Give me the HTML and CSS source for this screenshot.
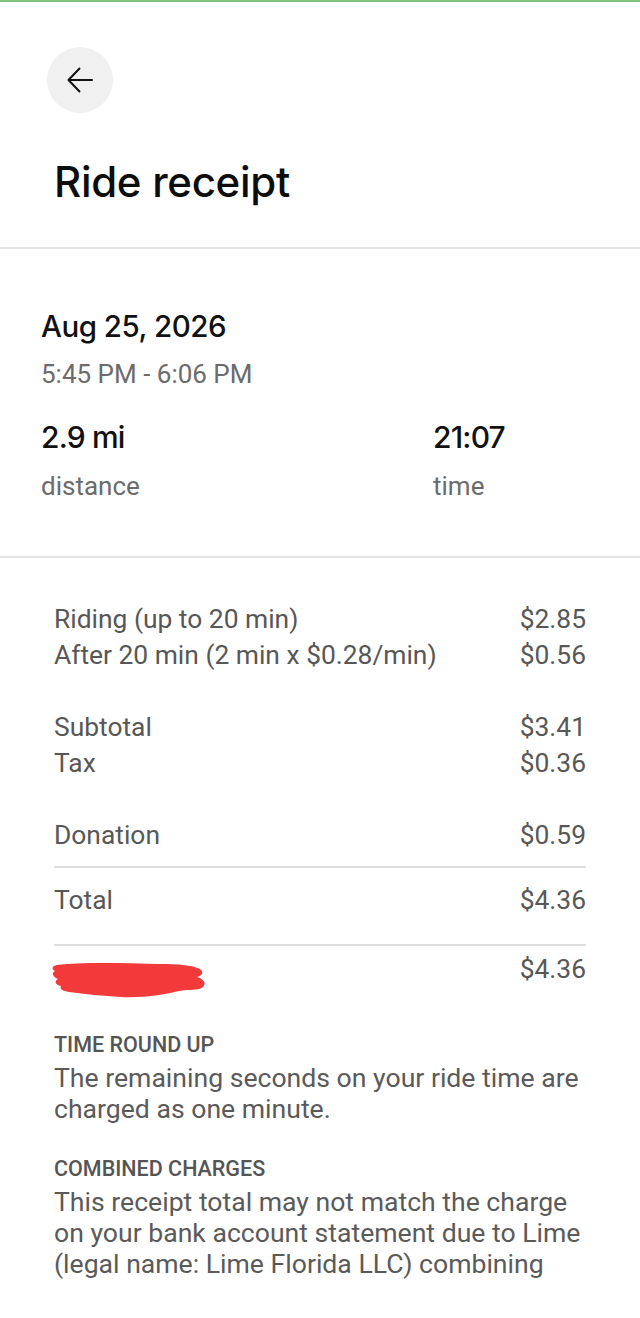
FILE: index.html
```html
<!DOCTYPE html>
<html lang="en">
<head>
<meta charset="utf-8">
<title>Ride receipt</title>
<link rel="stylesheet" href="styles.css">
</head>
<body>
<div class="top-bar"></div>
<header class="header">
  <button class="back" aria-label="Back">
    <svg viewBox="0 0 28 28" width="28" height="28" fill="none" stroke="#111" stroke-width="2" stroke-linecap="round" stroke-linejoin="round"><path d="M26 14H2.5M13.5 2.5 2.5 14l11 11.5"/></svg>
  </button>
  <h1 class="title">Ride receipt</h1>
</header>

<section class="info">
  <div class="date">Aug 25, 2026</div>
  <div class="range">5:45 PM - 6:06 PM</div>
  <div class="stats">
    <div class="stat">
      <div class="stat-value">2.9 mi</div>
      <div class="stat-label">distance</div>
    </div>
    <div class="stat">
      <div class="stat-value">21:07</div>
      <div class="stat-label">time</div>
    </div>
  </div>
</section>

<section class="charges">
  <div class="group">
    <div class="row"><span>Riding (up to 20 min)</span><span>$2.85</span></div>
    <div class="row"><span>After 20 min (2 min x $0.28/min)</span><span>$0.56</span></div>
  </div>
  <div class="group">
    <div class="row"><span>Subtotal</span><span>$3.41</span></div>
    <div class="row"><span>Tax</span><span>$0.36</span></div>
  </div>
  <div class="group">
    <div class="row"><span>Donation</span><span>$0.59</span></div>
  </div>
  <hr class="rule rule-a">
  <div class="row total"><span>Total</span><span>$4.36</span></div>
  <hr class="rule rule-b">
  <div class="row card">
    <svg class="redact" viewBox="0 0 156 38" width="156" height="38"><path fill="#f23a3a" d="M6 4 C30 1 70 2 110 3 C130 3 146 5 150 9 C153 12 150 15 146 16 C152 18 156 22 152 26 C148 30 138 28 128 30 C112 34 90 37 70 36 C52 35 34 33 18 31 C12 30 8 28 10 25 C4 24 3 20 7 18 C2 16 0 12 4 10 C0 8 1 5 6 4 Z"/></svg>
    <span>$4.36</span>
  </div>
  <div class="note">
    <h2 class="note-title">TIME ROUND UP</h2>
    <p class="note-text">The remaining seconds on your ride time are charged as one minute.</p>
  </div>
  <div class="note note-2">
    <h2 class="note-title">COMBINED CHARGES</h2>
    <p class="note-text">This receipt total may not match the charge on your bank account statement due to Lime (legal name: Lime Florida LLC) combining</p>
  </div>
</section>
</body>
</html>
```
FILE: styles.css
```css
* { box-sizing: border-box; }
html, body { margin: 0; padding: 0; background: #fff; }
body { font-family: Roboto, "Liberation Sans", sans-serif; color: #111; }

.top-bar { height: 2px; background: #7cc47f; }

.header {
  padding: 45px 0 0 47px;
  border-bottom: 2px solid #e4e4e4;
  padding-bottom: 41px;
}
.back {
  width: 66px; height: 66px;
  border-radius: 50%;
  border: none;
  background: #f0f0f0;
  display: flex; align-items: center; justify-content: center;
  padding: 0; margin: 0;
}
.title {
  margin: 45px 0 0 7px;
  font-family: Inter, "Noto Sans", sans-serif;
  font-weight: 500;
  font-size: 42px;
  line-height: 48px;
  letter-spacing: -0.3px;
  color: #0d0d0d;
}

.info {
  padding: 60px 41px 55px;
  border-bottom: 2px solid #e4e4e4;
}
.date {
  font-family: Inter, "Noto Sans", sans-serif;
  font-weight: 500;
  font-size: 29.5px;
  line-height: 34px;
  letter-spacing: -0.5px;
  color: #111;
}
.range {
  margin-top: 16px;
  font-size: 26px;
  line-height: 30px;
  color: #6b6b6b;
}
.stats {
  margin-top: 30px;
  display: grid;
  grid-template-columns: 392px 1fr;
}
.stat-value {
  font-family: Inter, "Noto Sans", sans-serif;
  font-weight: 500;
  font-size: 30px;
  line-height: 36px;
  letter-spacing: -0.8px;
  color: #111;
}
.stat-label {
  margin-top: 16px;
  font-size: 26px;
  line-height: 30px;
  color: #6b6b6b;
}

.charges {
  padding: 43px 54px 0;
  color: #555;
}
.group + .group { margin-top: 36px; }
.row {
  display: flex;
  justify-content: space-between;
  align-items: flex-start;
  font-size: 26.4px;
  line-height: 36px;
  color: #575757;
}
.rule {
  border: none;
  height: 2px;
  background: #dedede;
  margin: 0;
}
.rule-a { margin-top: 13px; }
.total { margin-top: 14px; }
.rule-b { margin-top: 26px; }
.card { margin-top: 5px; }
.redact { margin: 10px 0 -12px -3px; display: block; }

.note { margin-top: 46px; }
.note-2 { margin-top: 33px; }
.note-title {
  margin: 0;
  font-size: 21.5px;
  line-height: 24px;
  font-weight: 500;
  color: #555;
}
.note-text {
  margin: 5px 0 0;
  font-size: 26.6px;
  line-height: 31px;
  color: #5a5a5a;
}
```
